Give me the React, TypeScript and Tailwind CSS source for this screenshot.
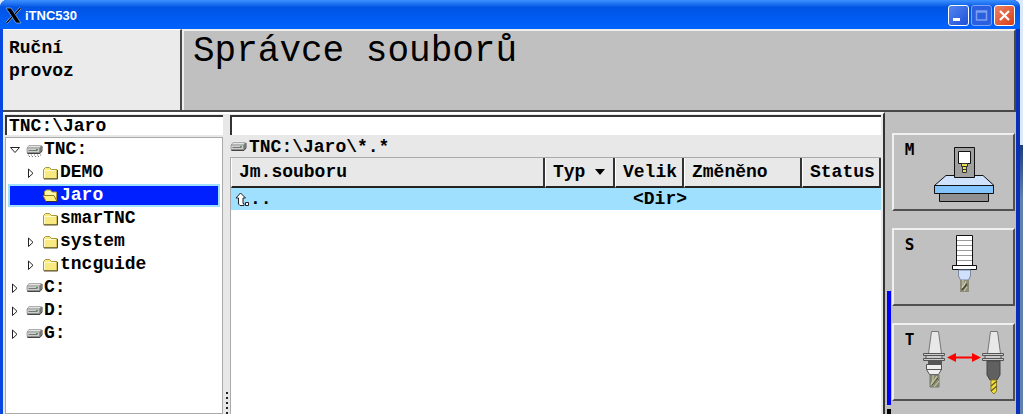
import type { ReactNode } from "react";

type Node = {
  label: string;
  kind: "drive" | "tnc" | "folder" | "open";
  depth: number;
  expander?: "open" | "closed";
  selected?: boolean;
};

const nodes: Node[] = [
  { label: "TNC:", kind: "tnc", depth: 0, expander: "open" },
  { label: "DEMO", kind: "folder", depth: 1, expander: "closed" },
  { label: "Jaro", kind: "open", depth: 1, selected: true },
  { label: "smarTNC", kind: "folder", depth: 1 },
  { label: "system", kind: "folder", depth: 1, expander: "closed" },
  { label: "tncguide", kind: "folder", depth: 1, expander: "closed" },
  { label: "C:", kind: "drive", depth: 0, expander: "closed" },
  { label: "D:", kind: "drive", depth: 0, expander: "closed" },
  { label: "G:", kind: "drive", depth: 0, expander: "closed" },
];

function Expander({ state }: { state?: "open" | "closed" }) {
  return (
    <svg width="11" height="12" viewBox="0 0 11 12" className="shrink-0" aria-hidden="true">
      {state === "open" && <path d="M1.500 3.500h9L6 8.500z" fill="#fff" stroke="#222" />}
      {state === "closed" && <path d="M3.500 2v8.500l4.500-4.200z" fill="#fff" stroke="#222" />}
    </svg>
  );
}

function DriveIcon({ legs = false }: { legs?: boolean }) {
  return (
    <svg width="17" height="16" viewBox="0 0 17 16" className="shrink-0" aria-hidden="true">
      <path d="M3 3.500h12.500v6l-2 2H1V6z" fill="#777" />
      <path d="M3 3.500h12.200L13.500 6H1.200z" fill="#e2e2e2" stroke="#999" strokeWidth=".6" />
      <path d="M1 6h12.500v4.500H1z" fill="#ccd0cc" stroke="#888" strokeWidth=".7" />
      <path d="M2.500 8.500h9" stroke="#777" />
      <path d="M10 7.500h2" stroke="#4c9a5c" />
      <path d="M1.500 11.500H14l2-2.500V4" fill="none" stroke="#444" />
      {legs && <path d="M2 13h13M3 14.500h12" stroke="#777" strokeDasharray="1 2" />}
    </svg>
  );
}

function FolderIcon({ open = false }: { open?: boolean }) {
  return (
    <svg width="17" height="16" viewBox="0 0 17 16" className="shrink-0" aria-hidden="true">
      {open ? (
        <>
          <path d="M2.500 8V3.500l2-1.500h4l1.500 2h4.500v8" fill="#fff7a8" stroke="#b09a30" />
          <path d="M1 7.500h11l3 6H4z" fill="#ffee80" stroke="#8e7a20" />
          <path d="M4 13.500h11.500V5" fill="none" stroke="#333" />
        </>
      ) : (
        <>
          <path d="M1.500 13.500v-9l2-2h4l2 2h5.500v9z" fill="#f8ea80" stroke="#a8963c" />
          <path d="M2.500 12.500V5.500h11" fill="none" stroke="#fffbd0" />
          <path d="M2 14h13.500V5" fill="none" stroke="#55502c" />
        </>
      )}
    </svg>
  );
}

function TreeRow({ node }: { node: Node }) {
  const indent = node.selected
    ? "border-2 border-[#a0e0ff] bg-[#0020ff] pl-[15px] text-white"
    : node.depth
      ? "pl-[17px]"
      : "pl-px";
  return (
    <li role="treeitem" aria-selected={!!node.selected} aria-level={node.depth + 1}>
      <button type="button" className={"flex h-[23px] w-full items-center text-left " + indent}>
        <Expander state={node.expander} />
        <span className="w-[6px] shrink-0" />
        {node.kind === "folder" || node.kind === "open" ? (
          <FolderIcon open={node.kind === "open"} />
        ) : (
          <DriveIcon legs={node.kind === "tnc"} />
        )}
        <span className="pl-px">{node.label}</span>
      </button>
    </li>
  );
}

function MachineIcon() {
  return (
    <>
      <path d="M27 39.500h37l11 10H15.500z" fill="#cfe3ff" stroke="#111" />
      <path d="M20.500 57.500h49v8h-49z" fill="#909090" stroke="#111" />
      <path d="M15.500 49.500h59v8h-59z" fill="#84c4ff" stroke="#111" />
      <path d="M35.500 11.500h20v30h-20z" fill="#a0a0a0" stroke="#111" />
      <path d="M39.500 15.500h12v12h-12z" fill="#fff" stroke="#111" />
      <path d="M42.500 27.500h6v3h-6zM43.500 30.500h4v6h-4z" fill="#e8df50" stroke="#333" />
      <path d="M43 33.500h5" stroke="#333" />
    </>
  );
}

function SpindleIcon() {
  return (
    <>
      <path d="M37.500 4.500h16v30h-16z" fill="#fff" stroke="#111" />
      <path d="M38 9.500h15M38 14.500h15M38 19.500h15M38 24.500h15M38 29.500h15" stroke="#999" />
      <path d="M33.500 34.500h24v4h-24z" fill="#fff" stroke="#111" />
      <path d="M39.500 39v6l2 4h8l2-4v-6z" fill="#d0e0fa" stroke="#7888a0" />
      <path d="M41 49h9v12h-9z" fill="#8c8c78" />
      <path d="M44 49v5l-1 3M47 50l-3 7M48 56l-3 4" fill="none" stroke="#d8d8c0" />
      <path d="M43 59l5-6" stroke="#484830" strokeWidth="1.500" />
    </>
  );
}

function ToolChangeIcon() {
  return (
    <>
      {[0, 59].map((x) => (
        <g key={x} transform={`translate(${x} 0)`}>
          <path d="M12.500 5.500h7l3 22h-13z" fill="#e8e8e8" stroke="#777" />
          <path d="M4.500 27.500h21v2h-21zM7 29.500h16v3H7zM4.500 32.500h21v2h-21z" fill="#ccc" stroke="#555" />
        </g>
      ))}
      <path d="M9 35h14v4H9z" fill="#555" />
      <path d="M7.500 38.500h15v5l-3 5h-9l-3-5zM8 43.500h15" fill="#eee" stroke="#555" />
      <path d="M11 49h9v12h-9z" fill="#8c8c70" stroke="#777" />
      <path d="M14 49v5l-2 5M18 50l-5 8M20 55l-5 6" fill="none" stroke="#d0d0b0" />
      <path d="M13 59l6-7" stroke="#485038" />
      <path d="M68 35h13v14l-3 5h-7l-3-5z" fill="#606060" stroke="#444" />
      <path d="M72 54h5.500v11L75 68l-3-3z" fill="#f0e040" stroke="#8a7a20" />
      <path d="M72 60l6-5M72 65l6-5" stroke="#6e6020" strokeWidth="1.500" />
      <path d="M34 31.500h22" stroke="#f00" strokeWidth="2" />
      <path d="M28 31.500l9-4.500v9zM62 31.500l-9-4.500v9z" fill="#f00" />
    </>
  );
}

function SoftKey({ letter, children }: { letter: string; children: ReactNode }) {
  return (
    <button
      type="button"
      className="flex h-[78px] w-full items-start gap-1 border-2 border-t-[#f0f0f0] border-r-[#505050] border-b-[#505050] border-l-[#f0f0f0] bg-[#c0c0c0] pt-px pl-[10px]"
    >
      <span className="w-[11px] pt-1 font-['DejaVu_Sans_Mono',monospace] text-[16px] leading-[20px]">{letter}</span>
      <svg width="90" height="72" viewBox="0 0 90 72" className="shrink-0" aria-hidden="true">
        {children}
      </svg>
    </button>
  );
}

const th =
  "border-r-2 border-b-2 border-l border-r-[#333] border-b-[#222] border-l-white pl-[7px] text-left font-bold";

export default function App() {
  return (
    <div className="flex h-screen overflow-hidden bg-[#dce9fb] font-['Liberation_Mono',monospace] text-[18px] font-bold text-black">
      <div className="flex min-w-0 flex-1 flex-col rounded-t-[7px] border-r-4 border-l-[3px] border-r-[#0a30b8] border-l-[#0848e0] bg-[#0848e0]">
        <header className="-mr-1 -ml-[3px] flex h-[29px] shrink-0 items-center rounded-t-[7px] bg-linear-to-b from-[#3c90ff] via-[#0054e3] via-25% to-[#0062ff] pt-[2px] pr-[5px] pl-[5px]">
          <svg width="17" height="17" viewBox="0 0 17 17" aria-hidden="true">
            <path d="M1 1h5l10 15h-5z" fill="#000" stroke="#9ab8ea" strokeWidth=".7" />
            <path d="M15.500 1L10 7M7 10l-5.500 6" stroke="#b8ccf0" strokeWidth="2.400" />
            <path d="M15.500 1L10 7M7 10l-5.500 6" stroke="#000" strokeWidth="1.200" />
          </svg>
          <h1 className="flex-1 pl-[3px] font-['Liberation_Sans',sans-serif] text-[13px] text-white">iTNC530</h1>
          <div className="flex gap-[2px]">
            <button type="button" aria-label="Minimalizovat" className="size-[21px] rounded-[3px] border border-white bg-linear-to-br from-[#5585f0] to-[#1c4fd8]">
              <svg viewBox="0 0 19 19" aria-hidden="true"><path d="M4 12h7v3H4z" fill="#fff" /></svg>
            </button>
            <button type="button" aria-label="Maximalizovat" className="size-[21px] rounded-[3px] border border-[#7fa4f4] bg-[#2a5fe0]">
              <svg viewBox="0 0 19 19" aria-hidden="true"><path d="M4.500 5h10v9h-10zM4 6h11" fill="none" stroke="#7b9ff0" strokeWidth="1.500" /></svg>
            </button>
            <button type="button" aria-label="Zavřít" className="size-[21px] rounded-[3px] border border-white bg-linear-to-br from-[#ec8060] to-[#d83c10]">
              <svg viewBox="0 0 19 19" aria-hidden="true"><path d="M5 5l9 9M14 5l-9 9" stroke="#fff" strokeWidth="2.200" /></svg>
            </button>
          </div>
        </header>

        <section className="flex h-[83px] shrink-0 border-b-2 border-[#484848]">
          <div className="w-[179px] shrink-0 border-t border-r-2 border-t-white border-r-[#484848] bg-[#ebebeb] pt-[7px] pl-[6px] leading-[23px]">
            Ruční
            <br />
            provoz
          </div>
          <h2 className="flex-1 border-t-2 border-r-2 border-l-2 border-t-[#eee] border-r-[#484848] border-l-[#eee] bg-[#c0c0c0] pt-[1px] pl-[9px] text-[36px] leading-[40px] font-normal">
            Správce souborů
          </h2>
        </section>

        <main className="flex min-h-0 flex-1">
          <div className="flex min-w-0 flex-1 border-t-2 border-r-2 border-t-white border-r-[#333] bg-[#e8e8e8] pt-px pr-[2px] pl-[2px]">
            <aside className="flex w-[218px] shrink-0 flex-col">
              <input
                aria-label="Cesta"
                defaultValue="TNC:\Jaro"
                className="mb-[2px] h-5 w-full shrink-0 border-t-2 border-l-2 border-t-[#333] border-l-[#333] bg-white pl-[2px] outline-none"
              />
              <ul role="tree" aria-label="Adresáře" className="min-h-0 flex-1 overflow-hidden border border-[#aaa] bg-white px-[2px]">
                {nodes.map((n) => (
                  <TreeRow key={n.label} node={n} />
                ))}
              </ul>
            </aside>
            <div className="flex w-[7px] shrink-0 flex-col items-center justify-end gap-[3px]">
              {[0, 1, 2, 3, 4].map((i) => (
                <span key={i} className="size-[2px] bg-[#222]" />
              ))}
            </div>
            <section className="flex min-w-0 flex-1 flex-col">
              <input
                aria-label="Soubor"
                className="h-5 w-full shrink-0 border-t-2 border-l-2 border-t-[#333] border-l-[#333] bg-white pl-[2px] outline-none"
              />
              <div className="flex h-[22px] shrink-0 items-center pt-[2px]">
                <DriveIcon />
                <span className="pl-[2px]">TNC:\Jaro\*.*</span>
              </div>
              <div className="min-h-0 flex-1 overflow-hidden border-t border-l border-[#aaa] bg-white">
                <table className="w-full table-fixed border-separate border-spacing-0 leading-[22px] whitespace-nowrap">
                  <colgroup>
                    <col />
                    <col className="w-[70px]" />
                    <col className="w-[69px]" />
                    <col className="w-[118px]" />
                    <col className="w-[79px]" />
                  </colgroup>
                  <thead>
                    <tr className="h-[30px] bg-[#e8e8e8]">
                      <th className={th}>Jm.souboru</th>
                      <th className={th}>
                        <span className="flex items-center gap-[10px]">
                          Typ
                          <svg width="10" height="6" viewBox="0 0 10 6" aria-hidden="true">
                            <path d="M0 0h10L5 6z" />
                          </svg>
                        </span>
                      </th>
                      <th className={th}>Velik</th>
                      <th className={th}>Změněno</th>
                      <th className={th}>Status</th>
                    </tr>
                  </thead>
                  <tbody>
                    <tr className="h-[22px] bg-[#a0e0ff]">
                      <td className="pl-[4px]">
                        <span className="flex items-center">
                          <svg width="15" height="15" viewBox="0 0 15 15" aria-hidden="true">
                            <path d="M5.500 1L1 6h2.500v6l1.500 1.500h4v-2H8V6h2.500z" fill="#fff" stroke="#222" />
                            <path d="M10.500 10.500h3v3h-3z" fill="#fff" stroke="#222" />
                          </svg>
                          ..
                        </span>
                      </td>
                      <td />
                      <td className="pl-[18px]">&lt;Dir&gt;</td>
                      <td />
                      <td />
                    </tr>
                  </tbody>
                </table>
              </div>
            </section>
          </div>

          <nav aria-label="Softklávesy" className="flex w-[131px] shrink-0 gap-px bg-[#c0c0c0] pr-px pl-[2px]">
            <div className="flex w-[4px] shrink-0 flex-col gap-1 pt-[179px]">
              <span className="h-[114px] shrink-0 bg-[#0000ff]" />
              <span className="flex-1 bg-black" />
            </div>
            <div className="flex flex-1 flex-col gap-[17px] pt-[21px]">
              <SoftKey letter="M"><MachineIcon /></SoftKey>
              <SoftKey letter="S"><SpindleIcon /></SoftKey>
              <SoftKey letter="T"><ToolChangeIcon /></SoftKey>
            </div>
          </nav>
        </main>
      </div>
      <div className="flex w-[3px] shrink-0 flex-col">
        <span className="h-[145px] bg-[#dce9fb]" />
        <span className="flex-1 bg-linear-to-b from-[#1c3c80] to-[#6080b0] to-20%" />
      </div>
    </div>
  );
}
